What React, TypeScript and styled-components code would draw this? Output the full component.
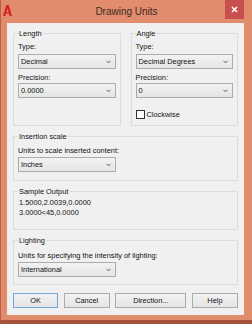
import React from "react";
import styled, { createGlobalStyle } from "styled-components";

const Global = createGlobalStyle`
  html, body { margin: 0; padding: 0; background: #E28C6E; }
  body { font-family: "Liberation Sans", Arial, sans-serif; color: #111; }
`;

const Window = styled.div`
  width: 252px;
  height: 324px;
  box-sizing: border-box;
  background: #E28C6E;
  border-left: 1px solid #B9603F;
  border-bottom: 4px solid #A6523A;
  display: flex;
  flex-direction: column;
`;

const TitleBar = styled.div`
  height: 23px;
  flex: none;
  display: grid;
  grid-template-columns: 1fr auto 1fr;
  align-items: start;
`;

const AppIcon = styled.svg`
  width: 9px;
  height: 11px;
  margin: 5px 0 0 2px;
`;

const Title = styled.div`
  font-size: 10px;
  line-height: 23px;
  color: #3a2a24;
  white-space: nowrap;
`;

const CloseButton = styled.div`
  justify-self: end;
  width: 19px;
  height: 19px;
  margin-right: 8px;
  background: #C94F4F;
  display: flex;
  align-items: center;
  justify-content: center;
`;

const Body = styled.div`
  flex: 1;
  padding: 0 8px 5px 6px;
  display: flex;
`;

const Client = styled.div`
  flex: 1;
  background: #F0F0F0;
  padding: 6px 6px 7px 6px;
  display: flex;
  flex-direction: column;
  gap: 6px;
`;

const TopRow = styled.div`
  display: grid;
  grid-template-columns: 1fr 1fr;
  column-gap: 10px;
`;

const GroupBox = styled.fieldset<{ $pt: number; $pb: number }>`
  margin: 0;
  min-width: 0;
  padding: ${(p) => p.$pt}px 4px ${(p) => p.$pb}px 4px;
  border: 1px solid #DCDCDC;
  display: flex;
  flex-direction: column;
`;

const Legend = styled.legend`
  font-size: 7.4px;
  line-height: 9px;
  padding: 0 1px;
  margin: 0;
  color: #111;
`;

const Label = styled.div<{ $mt?: number }>`
  font-size: 7.4px;
  line-height: 9px;
  height: 9px;
  margin-top: ${(p) => p.$mt ?? 0}px;
  padding-left: 0;
  white-space: nowrap;
`;

const Combo = styled.div<{ $mt: number; $w?: number }>`
  margin-top: ${(p) => p.$mt}px;
  height: 15px;
  box-sizing: border-box;
  width: ${(p) => (p.$w ? `${p.$w}px` : "auto")};
  border: 1px solid #ACACAC;
  background: linear-gradient(#F2F2F2, #E5E5E5);
  display: flex;
  align-items: center;
  justify-content: space-between;
  padding: 0 4px 0 2px;
  font-size: 7.4px;
  white-space: nowrap;
`;

const Chevron = () => (
  <svg width="5" height="4" viewBox="0 0 5 4">
    <path d="M0.5 0.8 L2.5 2.8 L4.5 0.8" fill="none" stroke="#555" strokeWidth="1" />
  </svg>
);

const CheckRow = styled.label`
  margin-top: 12px;
  height: 9px;
  display: flex;
  align-items: center;
  gap: 2px;
  font-size: 7.4px;
  line-height: 9px;
`;

const CheckBox = styled.span`
  width: 9px;
  height: 9px;
  box-sizing: border-box;
  border: 1px solid #333;
  background: #fff;
`;

const SampleLine = styled.div`
  font-size: 7.4px;
  line-height: 10px;
  padding-left: 1px;
  white-space: nowrap;
`;

const ButtonRow = styled.div`
  margin-top: 2px;
  display: flex;
  justify-content: space-between;
`;

const Button = styled.div<{ $w: number; $default?: boolean }>`
  width: ${(p) => p.$w}px;
  height: 15px;
  box-sizing: border-box;
  border: 1px solid ${(p) => (p.$default ? "#6FA5D8" : "#ACACAC")};
  background: linear-gradient(#F2F2F2, #E4E4E4);
  display: flex;
  align-items: center;
  justify-content: center;
  font-size: 7.4px;
  color: #111;
`;

const Dropdown = ({ value, mt }: { value: string; mt: number }) => (
  <Combo $mt={mt}>
    <span>{value}</span>
    <Chevron />
  </Combo>
);

const SmallDropdown = ({ value, mt }: { value: string; mt: number }) => (
  <Combo $mt={mt} $w={98}>
    <span>{value}</span>
    <Chevron />
  </Combo>
);

export default function App() {
  return (
    <>
      <Global />
      <Window>
        <TitleBar>
          <AppIcon viewBox="0 0 9 11">
            <path d="M0 11 L3.2 0 L5.8 0 L9 11 L6.6 11 L4.5 3.6 L2.4 11 Z" fill="#D2232A" />
            <path d="M2.9 7.2 L6.1 7.2 L6.5 8.6 L2.5 8.6 Z" fill="#D2232A" />
          </AppIcon>
          <Title>Drawing Units</Title>
          <CloseButton>
            <svg width="7" height="7" viewBox="0 0 7 7">
              <path d="M1 1 L6 6 M6 1 L1 6" stroke="#fff" strokeWidth="1.6" />
            </svg>
          </CloseButton>
        </TitleBar>
        <Body>
          <Client>
            <TopRow>
              <GroupBox $pt={4} $pb={6}>
                <Legend>Length</Legend>
                <Label>Type:</Label>
                <Dropdown value="Decimal" mt={3} />
                <Label $mt={4}>Precision:</Label>
                <Dropdown value="0.0000" mt={1} />
              </GroupBox>
              <GroupBox $pt={4} $pb={6}>
                <Legend>Angle</Legend>
                <Label>Type:</Label>
                <Dropdown value="Decimal Degrees" mt={3} />
                <Label $mt={4}>Precision:</Label>
                <Dropdown value="0" mt={1} />
                <CheckRow>
                  <CheckBox />
                  <span>Clockwise</span>
                </CheckRow>
              </GroupBox>
            </TopRow>
            <GroupBox $pt={5} $pb={8}>
              <Legend>Insertion scale</Legend>
              <Label>Units to scale inserted content:</Label>
              <SmallDropdown value="Inches" mt={2} />
            </GroupBox>
            <GroupBox $pt={2} $pb={11}>
              <Legend>Sample Output</Legend>
              <SampleLine>1.5000,2.0039,0.0000</SampleLine>
              <SampleLine>3.0000&lt;45,0.0000</SampleLine>
            </GroupBox>
            <GroupBox $pt={6} $pb={7}>
              <Legend>Lighting</Legend>
              <Label>Units for specifying the intensity of lighting:</Label>
              <SmallDropdown value="International" mt={2} />
            </GroupBox>
            <ButtonRow>
              <Button $w={45} $default>OK</Button>
              <Button $w={46}>Cancel</Button>
              <Button $w={71}>Direction...</Button>
              <Button $w={46}>Help</Button>
            </ButtonRow>
          </Client>
        </Body>
      </Window>
    </>
  );
}
